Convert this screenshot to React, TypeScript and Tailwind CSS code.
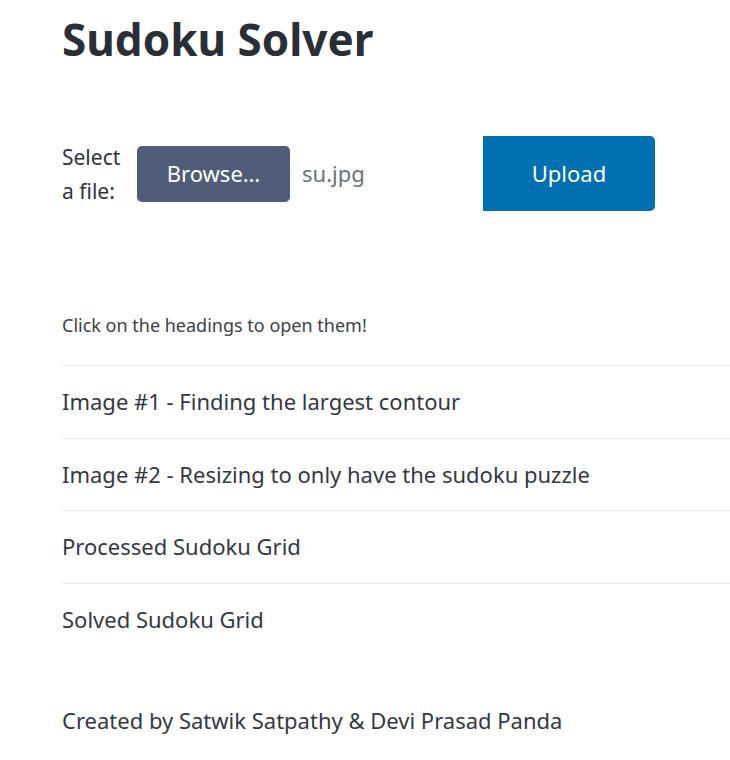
import { useState } from "react";

const sections = [
  "Image #1 - Finding the largest contour",
  "Image #2 - Resizing to only have the sudoku puzzle",
  "Processed Sudoku Grid",
  "Solved Sudoku Grid",
];

export default function App() {
  const [open, setOpen] = useState<number | null>(null);

  return (
    <div className="min-h-screen bg-white pl-[62px] font-['Noto_Sans',sans-serif] text-[#2e333d]">
      <h1 className="pt-[10px] text-[44px] font-bold leading-[58px] text-[#2a2f37]">Sudoku Solver</h1>

      <div className="mt-[68px] flex items-center">
        <label className="w-[75px] text-[21px] leading-[34px]">Select a file:</label>
        <div className="flex h-[56px] w-[153px] items-center justify-center rounded-[5px] bg-[#505d78] text-[22px] text-white">
          Browse…
        </div>
        <span className="ml-[12px] w-[181px] text-[22px] text-[#6b7280]">su.jpg</span>
        <button className="h-[75px] w-[172px] rounded-r-[5px] bg-[#0070b0] text-[22px] text-white">Upload</button>
      </div>

      <p className="mt-[101px] text-[18px] leading-[26px] text-[#3a3f48]">Click on the headings to open them!</p>

      <div className="mt-[27px]">
        {sections.map((title, i) => (
          <div key={i} className="border-t border-[#e8eaee]">
            <button
              onClick={() => setOpen(open === i ? null : i)}
              className="flex h-[71.5px] w-full items-center text-left text-[22px] text-[#333843]"
            >
              {title}
            </button>
          </div>
        ))}
      </div>

      <p className="mt-[50px] text-[22px] leading-[30px] text-[#333843]">Created by Satwik Satpathy &amp; Devi Prasad Panda</p>
    </div>
  );
}
